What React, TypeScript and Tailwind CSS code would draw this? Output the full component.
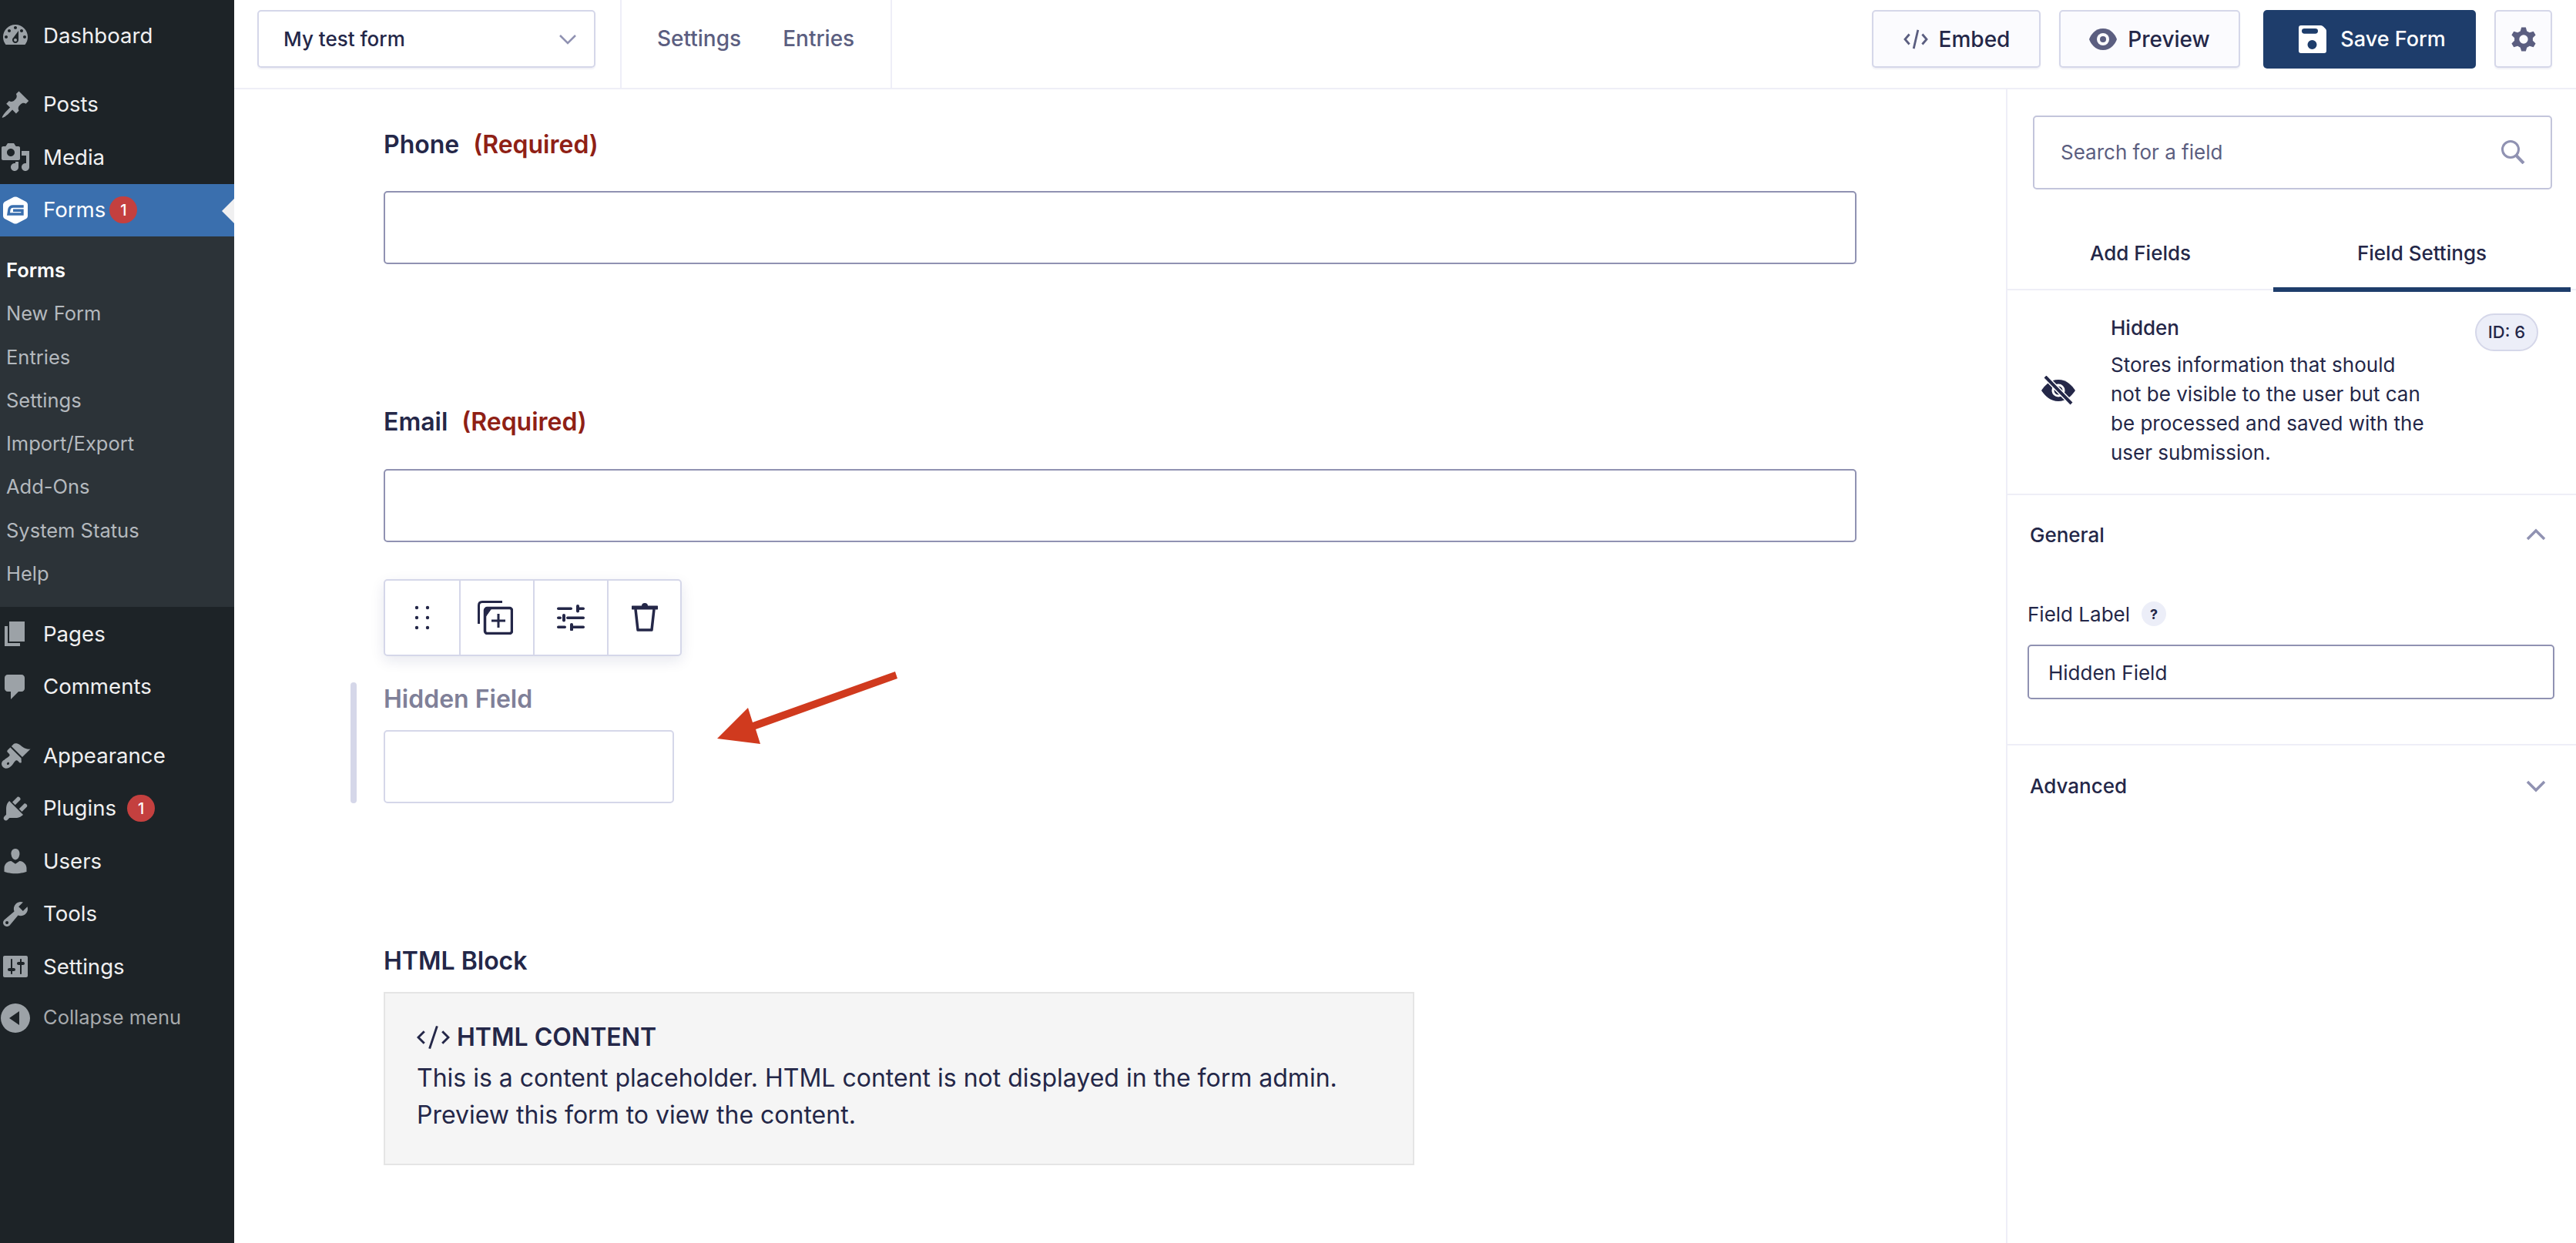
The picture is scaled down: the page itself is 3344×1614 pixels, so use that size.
import { ReactNode } from "react";

const dash: Record<string, string> = {
  dashboard:
    "M3.76 16h12.48c1.1-1.37 1.76-3.11 1.76-5 0-4.42-3.58-8-8-8s-8 3.58-8 8c0 1.89.66 3.63 1.76 5zM10 4c.55 0 1 .45 1 1s-.45 1-1 1-1-.45-1-1 .45-1 1-1zM6 6c.55 0 1 .45 1 1s-.45 1-1 1-1-.45-1-1 .45-1 1-1zm8 0c.55 0 1 .45 1 1s-.45 1-1 1-1-.45-1-1 .45-1 1-1zm-5.37 5.55L12 7v6c0 1.1-.9 2-2 2s-2-.9-2-2c0-.57.24-1.08.63-1.45zM4 10c.55 0 1 .45 1 1s-.45 1-1 1-1-.45-1-1 .45-1 1-1zm12 0c.55 0 1 .45 1 1s-.45 1-1 1-1-.45-1-1 .45-1 1-1zm-5 3c0-.55-.45-1-1-1s-1 .45-1 1 .45 1 1 1 1-.45 1-1z",
  posts:
    "M10.44 3.02l1.82-1.82 6.36 6.35-1.83 1.82c-1.05-.68-2.48-.57-3.41.36l-.75.75c-.92.93-1.04 2.35-.35 3.41l-1.83 1.82-2.41-2.41-2.8 2.79c-.42.42-3.38 2.71-3.8 2.29s1.86-3.39 2.28-3.81l2.79-2.79L4.1 9.36l1.83-1.82c1.05.69 2.48.57 3.4-.36l.75-.75c.93-.92 1.05-2.35.36-3.41z",
  media:
    "M13 11V4c0-.55-.45-1-1-1h-1.67L9 1H5L3.67 3H2c-.55 0-1 .45-1 1v7c0 .55.45 1 1 1h10c.55 0 1-.45 1-1zM7 4.5c1.38 0 2.5 1.12 2.5 2.5S8.38 9.5 7 9.5 4.5 8.38 4.5 7 5.62 4.5 7 4.5zM14 6h5v10.5c0 1.38-1.12 2.5-2.5 2.5S14 17.88 14 16.5s1.12-2.5 2.5-2.5c.17 0 .34.02.5.05V9h-3V6zm-4 8.05V13h2v3.5c0 1.38-1.12 2.5-2.5 2.5S7 17.88 7 16.5 8.12 14 9.5 14c.17 0 .34.02.5.05z",
  pages: "M6 15V2h10v13H6zm-1 1h8v2H3V5h2v11z",
  comments: "M5 2h9c1.1 0 2 .9 2 2v7c0 1.1-.9 2-2 2h-2l-5 5v-5H5c-1.1 0-2-.9-2-2V4c0-1.1.9-2 2-2z",
  appearance:
    "M14.48 11.06L7.41 3.99l1.5-1.5c.5-.56 2.3-.47 3.51.32 1.21.8 1.43 1.28 2.91 2.1 1.18.64 2.45 1.26 4.45.85zm-.71.71L6.7 4.7 4.93 6.47c-.39.39-.39 1.02 0 1.41l1.06 1.06c.39.39.39 1.03 0 1.42-.6.6-1.43 1.11-2.21 1.69-.35.26-.7.53-1.01.84C1.43 13.23.1 15.65 1.93 17.48c1.81 1.82 4.25.5 5.59-.85.31-.31.58-.66.84-1.01.58-.78 1.09-1.61 1.69-2.21.39-.39 1.02-.39 1.41 0l1.06 1.06c.39.39 1.02.39 1.41 0zM5.75 15.75c-.32.33-.82.38-1.12.08-.29-.3-.25-.8.08-1.13.32-.33.82-.38 1.12-.08s.25.8-.08 1.13z",
  plugins:
    "M13.11 4.36L9.87 7.6 8 5.73l3.24-3.24c.35-.34 1.05-.2 1.56.32.52.51.66 1.21.31 1.55zm-8 1.77l.91-1.12 9.01 9.01-1.19.84c-.71.71-2.63 1.16-3.82 1.16H6.14L4.9 17.26c-.59.59-1.54.59-2.12 0-.59-.58-.59-1.53 0-2.12l1.24-1.24v-3.88c0-1.13.4-3.19 1.09-3.89zm7.26 3.97l3.24-3.24c.34-.35 1.04-.21 1.55.31.52.51.66 1.21.31 1.55l-3.24 3.25z",
  users:
    "M10 9.25c-2.27 0-2.73-3.44-2.73-3.44C7 4.02 7.82 2 9.97 2c2.16 0 2.98 2.02 2.71 3.81 0 0-.41 3.44-2.68 3.44zm0 2.57L12.72 10c2.39 0 4.52 2.33 4.52 4.53v2.49s-3.65 1.13-7.24 1.13c-3.65 0-7.24-1.13-7.24-1.13v-2.49c0-2.25 1.94-4.48 4.47-4.48z",
  tools:
    "M16.68 9.77c-1.34 1.34-3.3 1.67-4.95.99l-5.41 6.52c-.99.99-2.59.99-3.58 0s-.99-2.59 0-3.57l6.52-5.42c-.68-1.65-.35-3.61.99-4.95 1.28-1.28 3.12-1.62 4.72-1.06l-2.89 2.89 2.82 2.82 2.86-2.87c.53 1.58.18 3.39-1.08 4.65zM3.81 16.21c.4.39 1.04.39 1.43 0 .4-.4.4-1.04 0-1.43-.39-.4-1.03-.4-1.43 0-.39.39-.39 1.03 0 1.43z",
  settings:
    "M18 16V4c0-.55-.45-1-1-1H3c-.55 0-1 .45-1 1v12c0 .55.45 1 1 1h14c.55 0 1-.45 1-1zM8 11h1c.55 0 1 .45 1 1s-.45 1-1 1H8v1.5c0 .28-.22.5-.5.5s-.5-.22-.5-.5V13H6c-.55 0-1-.45-1-1s.45-1 1-1h1V5.5c0-.28.22-.5.5-.5s.5.22.5.5V11zm5-2h-1c-.55 0-1-.45-1-1s.45-1 1-1h1V5.5c0-.28.22-.5.5-.5s.5.22.5.5V7h1c.55 0 1 .45 1 1s-.45 1-1 1h-1v5.5c0 .28-.22.5-.5.5s-.5-.22-.5-.5V9z",
  collapse:
    "M10 .5c5.2 0 9.5 4.3 9.5 9.5s-4.3 9.5-9.5 9.5S.5 15.2.5 10 4.8.5 10 .5zM12.5 5.5L6 10l6.5 4.5z",
};

function DashIcon({ name }: { name: string }) {
  return (
    <svg viewBox="0 0 20 20" className="h-[40px] w-[40px] shrink-0 fill-[#9ca2a7]">
      <path d={dash[name]} />
    </svg>
  );
}

function Badge() {
  return (
    <span className="flex h-[35px] w-[36px] items-center justify-center rounded-full bg-[#c4403f] text-[20px] font-medium text-white">
      1
    </span>
  );
}

function MenuRow({ icon, label, badge, gap }: { icon: string; label: string; badge?: boolean; gap?: boolean }) {
  return (
    <div className={"flex h-[68.5px] items-center text-[27.6px] text-[#f0f0f1] " + (gap ? "mt-[21px]" : "")}>
      <DashIcon name={icon} />
      <span className="ml-[16px]">{label}</span>
      {badge && <span className="ml-[14px]"><Badge /></span>}
    </div>
  );
}

function Sidebar() {
  const sub = ["New Form", "Entries", "Settings", "Import/Export", "Add-Ons", "System Status", "Help"];
  return (
    <aside className="h-[1614px] w-[304px] shrink-0 bg-[#1d2327] pt-[12px]">
      <MenuRow icon="dashboard" label="Dashboard" />
      <MenuRow icon="posts" label="Posts" gap />
      <MenuRow icon="media" label="Media" />
      <div className="relative flex h-[68.5px] items-center bg-[#3a6fae] text-[27.6px] text-white">
        <svg viewBox="0 0 32 36" className="ml-[4px] h-[36px] w-[32px] shrink-0">
          <path d="M14 .8 Q16 0 18 .8 L29 6.5 Q32 8 32 11 L32 25 Q32 28 29 29.5 L18 35.2 Q16 36 14 35.2 L3 29.5 Q0 28 0 25 L0 11 Q0 8 3 6.5 Z" fill="#fff" />
          <path d="M26.7 13 H13 Q9 13 8 16.5 L7 23 H25 V18.2 H13" fill="none" stroke="#3a6fae" strokeWidth="3.4" />
        </svg>
        <span className="ml-[20px]">Forms</span>
        <span className="ml-[5px]"><Badge /></span>
        <span className="absolute right-0 top-[19px] h-0 w-0 border-y-[16px] border-r-[16px] border-y-transparent border-r-[#f0f0f1]" />
      </div>
      <div className="bg-[#2c3338] pb-[15px] pl-[8px] pt-[16px] text-[25.5px]">
        <div className="flex h-[56.25px] items-center font-semibold text-white">Forms</div>
        {sub.map((s) => (
          <div key={s} className="flex h-[56.25px] items-center text-[#b4b9be]">{s}</div>
        ))}
      </div>
      <div className="pt-[1px]">
        <MenuRow icon="pages" label="Pages" />
        <MenuRow icon="comments" label="Comments" />
        <MenuRow icon="appearance" label="Appearance" gap />
        <MenuRow icon="plugins" label="Plugins" badge />
        <MenuRow icon="users" label="Users" />
        <MenuRow icon="tools" label="Tools" />
        <MenuRow icon="settings" label="Settings" />
        <div className="flex h-[64px] items-center text-[25.5px] text-[#a7aaad]">
          <DashIcon name="collapse" />
          <span className="ml-[16px]">Collapse menu</span>
        </div>
      </div>
    </aside>
  );
}

function Btn({ w, children }: { w: string; children: ReactNode }) {
  return (
    <div className={"flex h-[75px] items-center justify-center rounded-[5px] border-2 border-[#d5d7e9] bg-[#fbfbfe] text-[28px] font-medium text-[#242748] shadow-[0_2px_2px_rgba(18,25,97,0.06)] " + w}>
      {children}
    </div>
  );
}

function TopBar() {
  return (
    <header className="flex h-[116px] shrink-0 border-b-2 border-[#eeeef7] bg-white">
      <div className="ml-[30px] mt-[13px] flex h-[75px] w-[439px] items-center justify-between rounded-[5px] border-2 border-[#d5d7e9] pl-[32px] pr-[22px] text-[26px] font-medium text-[#242748] shadow-[0_2px_2px_rgba(18,25,97,0.06)]">
        My test form
        <svg viewBox="0 0 24 14" className="h-[14px] w-[24px] fill-none stroke-[#9092b2] stroke-[2.5]"><path d="M2 2 L12 12 L22 2" /></svg>
      </div>
      <nav className="ml-[32px] flex w-[353px] items-center gap-[54px] border-x-2 border-[#eeeef7] pb-[14px] pl-[46px] text-[28px] font-medium text-[#5b5e80]">
        <span>Settings</span>
        <span>Entries</span>
      </nav>
      <div className="ml-auto mr-[31px] mt-[13px] flex">
        <Btn w="w-[219px] gap-[13px]">
          <svg viewBox="0 0 34 30" className="h-[28px] w-[34px] fill-none stroke-[#5b5e80] stroke-[3]"><path d="M8 8 L2 15 L8 22 M26 8 L32 15 L26 22 M20 2 L14 28" /></svg>
          Embed
        </Btn>
        <Btn w="ml-[24px] w-[235px] gap-[14px]">
          <svg viewBox="0 0 36 28" className="h-[28px] w-[36px]"><path d="M18 0 C28 0 34 8 36 14 C34 20 28 28 18 28 C8 28 2 20 0 14 C2 8 8 0 18 0Z" fill="#5b5e80" /><circle cx="18" cy="14" r="8" fill="#fbfbfe" /><circle cx="18" cy="14" r="4" fill="#5b5e80" /></svg>
          Preview
        </Btn>
        <div className="ml-[30px] flex h-[76px] w-[276px] items-center justify-center gap-[18px] rounded-[5px] bg-[#1e3d6b] pl-[7px] text-[27px] font-medium text-white">
          <svg viewBox="0 0 36 36" className="h-[36px] w-[36px]"><path fillRule="evenodd" d="M3 0 H29 Q30.5 0 32 1.5 L34.5 4 Q36 5.5 36 7 V33 Q36 36 33 36 H3 Q0 36 0 33 V3 Q0 0 3 0Z M7.5 4 Q4 4 4 7.3 Q4 10.7 7.5 10.7 H21.5 Q25 10.7 25 7.3 Q25 4 21.5 4Z M17.5 19 A6 6 0 1 0 17.5 31 A6 6 0 1 0 17.5 19Z" fill="#fff" /></svg>
          Save Form
        </div>
        <Btn w="ml-[24px] w-[75px]">
          <svg viewBox="0 0 24 24" className="h-[34px] w-[34px] fill-[#5b5e80]"><path fillRule="evenodd" d="M10 1 H14 L15 4.5 L17.5 5.8 L21 4.8 L23 8.2 L20.4 10.8 V13.2 L23 15.8 L21 19.2 L17.5 18.2 L15 19.5 L14 23 H10 L9 19.5 L6.5 18.2 L3 19.2 L1 15.8 L3.6 13.2 V10.8 L1 8.2 L3 4.8 L6.5 5.8 L9 4.5Z M12 8 A4 4 0 1 0 12 16 A4 4 0 1 0 12 8Z" /></svg>
        </Btn>
      </div>
    </header>
  );
}

function FieldLabel({ text, required, muted }: { text: string; required?: boolean; muted?: boolean }) {
  return (
    <div className={"flex h-[44px] items-center text-[32px] font-semibold " + (muted ? "text-[#7f8098]" : "text-[#242748]")}>
      {text}
      {required && <span className="ml-[18px] text-[#8f2015]">(Required)</span>}
    </div>
  );
}

function ToolCell({ w, children, last }: { w: string; children: ReactNode; last?: boolean }) {
  return (
    <div className={"flex h-full items-center justify-center " + w + (last ? "" : " border-r-2 border-[#d5d7e9]")}>
      {children}
    </div>
  );
}

function Toolbar() {
  return (
    <div className="mt-[48px] flex h-[100px] w-[387px] rounded-[5px] border-2 border-[#d5d7e9] bg-white shadow-[0_6px_18px_rgba(18,25,97,0.1)]">
      <ToolCell w="w-[98px]">
        <svg viewBox="0 0 20 34" className="h-[34px] w-[20px] fill-[#242748]">
          <circle cx="3" cy="4" r="2.2" /><circle cx="17" cy="4" r="2.2" />
          <circle cx="3" cy="17" r="2.2" /><circle cx="17" cy="17" r="2.2" />
          <circle cx="3" cy="30" r="2.2" /><circle cx="17" cy="30" r="2.2" />
        </svg>
      </ToolCell>
      <ToolCell w="w-[96px] pr-[4px]">
        <svg viewBox="0 0 46 44" className="h-[44px] w-[46px] fill-none stroke-[#242748]">
          <path d="M1.5 30 V6 Q1.5 1.5 6 1.5 H32" strokeWidth="3" />
          <rect x="9.5" y="9.5" width="35" height="33" rx="3" strokeWidth="3.5" />
          <path d="M9.5 22 V10 H18 Z" fill="#242748" strokeWidth="1" />
          <path d="M27 17 V35 M18 26 H36" strokeWidth="3" />
        </svg>
      </ToolCell>
      <ToolCell w="w-[96px]">
        <svg viewBox="0 0 36 34" className="h-[34px] w-[36px] fill-[#242748]">
          <rect x="0" y="3.5" width="20" height="3.5" rx="1.7" /><rect x="26" y="3.5" width="10" height="3.5" rx="1.7" /><rect x="25" y="0" width="4" height="10.5" rx="2" />
          <rect x="0" y="15.5" width="6" height="3.5" rx="1.7" /><rect x="12" y="15.5" width="24" height="3.5" rx="1.7" /><rect x="7" y="12" width="4" height="10.5" rx="2" />
          <rect x="0" y="27.5" width="12" height="3.5" rx="1.7" /><rect x="18" y="27.5" width="18" height="3.5" rx="1.7" /><rect x="17" y="24" width="4" height="10.5" rx="2" />
        </svg>
      </ToolCell>
      <ToolCell w="flex-1" last>
        <svg viewBox="0 0 34 38" className="h-[38px] w-[34px]">
          <path d="M1 6 H33" stroke="#242748" strokeWidth="5" strokeLinecap="round" />
          <circle cx="17" cy="4" r="4" fill="#242748" />
          <path d="M5 8 L8 35 H26 L29 8" fill="none" stroke="#242748" strokeWidth="3.5" strokeLinejoin="round" />
        </svg>
      </ToolCell>
    </div>
  );
}

function Canvas() {
  return (
    <main className="relative flex-1 bg-white pl-[194px] pt-[50px]">
      <FieldLabel text="Phone" required />
      <div className="mt-[38px] h-[95px] w-[1912px] rounded-[5px] border-2 border-[#9092b2]" />
      <div className="mt-[183px]"><FieldLabel text="Email" required /></div>
      <div className="mt-[39px] h-[95px] w-[1912px] rounded-[5px] border-2 border-[#9092b2]" />
      <Toolbar />
      <div className="relative mt-[34px]">
        <div className="absolute -left-[43px] top-0 h-[157px] w-[8px] rounded-full bg-[#d5d7e9]" />
        <FieldLabel text="Hidden Field" muted />
        <div className="mt-[18px] h-[95px] w-[377px] rounded-[5px] border-2 border-[#d5d7e9]" />
      </div>
      <div className="mt-[183px]"><FieldLabel text="HTML Block" /></div>
      <div className="mt-[18px] h-[225px] w-[1338px] border-2 border-[#e5e5e5] bg-[#f5f5f5] pl-[41px] pt-[33px] text-[32px] leading-[48px] text-[#242748]">
        <div className="flex h-[48px] items-center font-semibold">
          <svg viewBox="0 0 44 32" className="mr-[9px] h-[32px] w-[43px] fill-none stroke-[#242748] stroke-[3]"><path d="M10 8 L2 16 L10 24 M34 8 L42 16 L34 24 M27 1 L17 31" /></svg>
          HTML CONTENT
        </div>
        <div className="mt-[5px]">This is a content placeholder. HTML content is not displayed in the form admin.</div>
        <div>Preview this form to view the content.</div>
      </div>
      {/* annotation arrow on top of the screenshot */}
      <svg viewBox="0 0 260 110" className="absolute left-[622px] top-[752px] h-[110px] w-[260px]">
        <path d="M236 4 L239 13 L55 79 L61 98 L5 91 L45 51 L51 70 Z" fill="#d03a1e" />
      </svg>
    </main>
  );
}

function RightPanel() {
  return (
    <section className="w-[740px] shrink-0 border-l-2 border-[#eeeef7] bg-white text-[#242748]">
      <div className="ml-[33px] mt-[34px] flex h-[96px] w-[674px] items-center justify-between rounded-[5px] border-2 border-[#c3c5db] pb-[2px] pl-[34px] pr-[33px] text-[26px] text-[#5b5e80]">
        Search for a field
        <svg viewBox="0 0 32 32" className="h-[32px] w-[32px] fill-none stroke-[#9092b2] stroke-[3]"><circle cx="13" cy="13" r="10.5" /><path d="M20.5 21 L30 31" strokeWidth="4" /></svg>
      </div>
      <div className="flex h-[131px] border-b-2 border-[#eeeef7] pr-[7px] text-[26px] font-medium">
        <div className="flex w-[345px] items-center justify-center pt-[36px]">Add Fields</div>
        <div className="relative flex flex-1 items-center justify-center pt-[36px]">
          Field Settings
          <div className="absolute inset-x-0 -bottom-[4px] h-[6px] bg-[#1e3d6b]" />
        </div>
      </div>
      <div className="flex h-[266px] border-b-2 border-[#eeeef7] pl-[44px] pt-[30px]">
        <div className="flex h-[200px] w-[44px] items-center">
          <svg viewBox="0 0 44 38" className="h-[38px] w-[44px]">
            <path d="M22 5 C33 5 40 13 44 19 C40 25 33 33 22 33 C11 33 4 25 0 19 C4 13 11 5 22 5Z" fill="#242748" />
            <circle cx="22" cy="19" r="7" fill="none" stroke="#fff" strokeWidth="3" />
            <path d="M5 1 L39 36" stroke="#fff" strokeWidth="7" />
            <path d="M5 1 L39 36" stroke="#242748" strokeWidth="4" />
          </svg>
        </div>
        <div className="ml-[46px] w-[412px] text-[26px] leading-[38px]">
          <div className="font-medium">Hidden</div>
          <div className="mt-[10px]">Stores information that should not be visible to the user but can be processed and saved with the user submission.</div>
        </div>
        <div className="ml-auto mr-[49px] flex h-[49px] w-[82px] items-center justify-center rounded-full border-2 border-[#d5d7e9] bg-[#eceef8] text-[22px] font-medium">
          ID: 6
        </div>
      </div>
      <div className="border-b-2 border-[#eeeef7] pb-[58px]">
        <div className="flex h-[100px] items-center justify-between pl-[29px] pr-[39px] pt-[2px] text-[26px] font-medium">
          General
          <svg viewBox="0 0 26 16" className="h-[16px] w-[26px] fill-none stroke-[#9092b2] stroke-[3.5]"><path d="M2 14 L13 3 L24 14" /></svg>
        </div>
        <div className="ml-[26px] mt-[35px] flex h-[38px] items-center text-[26px]">
          Field Label
          <span className="ml-[15px] flex h-[32px] w-[32px] items-center justify-center rounded-full bg-[#eceef8] text-[18px] font-bold">?</span>
        </div>
        <div className="ml-[26px] mt-[21px] flex h-[71px] w-[684px] items-center rounded-[5px] border-2 border-[#9092b2] pl-[25px] pt-[1px] text-[26px]">
          Hidden Field
        </div>
      </div>
      <div className="flex h-[104px] items-center justify-between pl-[29px] pr-[39px] pt-[1px] text-[26px] font-medium">
        Advanced
        <svg viewBox="0 0 26 16" className="h-[16px] w-[26px] fill-none stroke-[#9092b2] stroke-[3.5]"><path d="M2 2 L13 13 L24 2" /></svg>
      </div>
    </section>
  );
}

export default function App() {
  return (
    <div className="flex h-[1614px] overflow-hidden bg-white font-['Inter',sans-serif]">
      <Sidebar />
      <div className="flex min-w-0 flex-1 flex-col">
        <TopBar />
        <div className="flex flex-1">
          <Canvas />
          <RightPanel />
        </div>
      </div>
    </div>
  );
}
